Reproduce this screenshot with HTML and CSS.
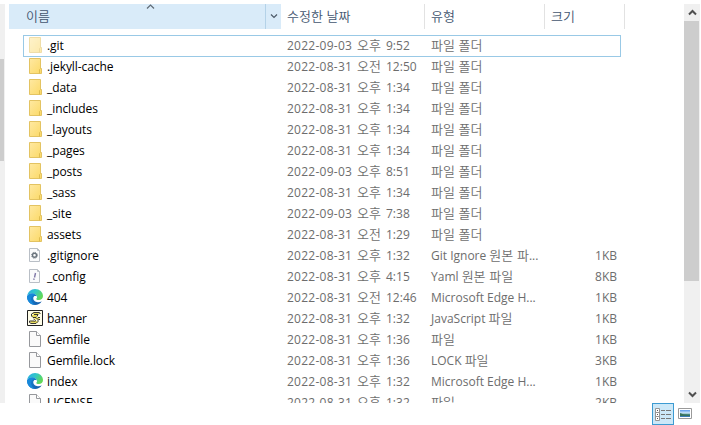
FILE: index.html
```html
<!DOCTYPE html>
<html lang="ko">
<head>
<meta charset="utf-8">
<title>파일 탐색기</title>
<link rel="stylesheet" href="styles.css">
</head>
<body>
<svg width="0" height="0" class="defs" aria-hidden="true">
  <defs>
    <linearGradient id="fold" x1="0" y1="0" x2="1" y2="1"><stop stop-color="#ffe9a2"/><stop offset="1" stop-color="#fbd967"/></linearGradient>
    <linearGradient id="wave" x1="0" y1="0" x2="1" y2="0.5"><stop stop-color="#2aa9e8"/><stop offset=".5" stop-color="#31c6c9"/><stop offset="1" stop-color="#62d957"/></linearGradient>
    <linearGradient id="deep" x1="0" y1="0" x2="1" y2="1"><stop stop-color="#168bdc"/><stop offset="1" stop-color="#1458a5"/></linearGradient>
    <linearGradient id="sky" x1="0" y1="0" x2="0" y2="1"><stop stop-color="#5b98ea"/><stop offset=".45" stop-color="#d2edfc"/><stop offset=".6" stop-color="#4b8a80"/><stop offset="1" stop-color="#3579c4"/></linearGradient>
  </defs>
  <symbol id="folder" viewBox="0 0 16 16">
    <path d="M2.500.5h11v10h1v5h-12z" fill="url(#fold)" stroke="#e3c362"/>
    <path d="M12.500 15.500v-4l1-1" fill="none" stroke="#dfbd50"/>
  </symbol>
  <symbol id="page" viewBox="0 0 16 16">
    <path d="M2.500.5h7l4 4v11h-11z" fill="#fafafa" stroke="#96989c"/>
    <path d="M9.500.5v4h4" fill="#fff" stroke="#96989c"/>
  </symbol>
  <symbol id="gear" viewBox="0 0 16 16">
    <path d="M2.500 1.500h8l2 2v11h-10z" fill="#fafbfc" stroke="#b9bfc6"/>
    <path d="M10.500 1.500v2h2" fill="none" stroke="#b9bfc6"/>
    <circle cx="7.500" cy="8.300" r="2" fill="none" stroke="#69737c" stroke-width="1.400"/>
    <circle cx="7.500" cy="8.300" r="3" fill="none" stroke="#7b848c" stroke-dasharray="1.200 1.156"/>
  </symbol>
  <symbol id="yaml" viewBox="0 0 16 16">
    <path d="M2.500 1.500h8l2 2v11h-10z" fill="#fafbfc" stroke="#b9bfc6"/>
    <path d="M10.500 1.500v2h2" fill="none" stroke="#b9bfc6"/>
    <path d="M8.500 5l-1 4.500M7.100 10.500l-.3 1.300" stroke="#7f78a8" stroke-width="1.400"/>
  </symbol>
  <symbol id="edge" viewBox="0 0 16 16">
    <path d="M.2 7C.7 3 4 0 8 0c4.600 0 8 3.300 8 7 0 2.500-1.900 4.100-4.200 4.100-1.700 0-2.700-.6-2.700-1.200 0-.5.8-.7.8-1.900C9.900 6 7.700 4.400 5 4.400 2.700 4.400 1 5.500.2 7z" fill="url(#wave)"/>
    <path d="M.1 7.300C1 5.500 2.800 4.400 5 4.400c2.700 0 4.900 1.600 4.900 3.600-.5-.9-1.500-1.200-2.300-1-2.200 1-1.800 5 2.100 6 2 .5 3.600.1 5-.7C13.300 14.800 10.800 16 8 16 3.300 16-.2 12 .1 7.300z" fill="url(#deep)"/>
    <path d="M.1 7.300C1 5.500 2.800 4.400 5 4.400c1.400 0 2.700.5 3.600 1.200C5 5.600 3 9.200 4.500 12c.8 1.700 2.100 3 3.500 4C3.300 16-.2 12 .1 7.300z" fill="#1788da"/>
    <path d="M9.900 8c0-.7-1.200-1.100-2-.9-1.300 1-1.400 3.300.3 4.500 1.800 1.300 4.500 1.100 6.500.1-1.900-.2-5.600-.2-5.600-1.800 0-.5.8-.7.8-1.900z" fill="#fff"/>
  </symbol>
  <symbol id="script" viewBox="0 0 16 16">
    <path d="M.5.5h15v15H.5z" fill="#fffde8" stroke="#222"/>
    <path d="M6 3.500h6M5 6h5M7.500 8.500h5M3.500 12h7" stroke="#e9dc5c" stroke-width="1.800"/>
    <path d="M13 4V3l-1-.5H7L4.500 4v2l1.500 1.500h3l2 2v2L9 13.500H4l-1.500-1V11H7M7 4.500h4l-1 2M6.500 9l2 1.500-1 1.500M11 7.500h2M11.500 9.500H13" fill="none" stroke="#222" stroke-width=".9"/>
  </symbol>
</svg>

<div class="window">
  <div class="explorer">
    <div class="nav-scroll"><div class="nav-thumb"></div></div>
    <main class="list">
      <header class="head">
        <div class="h-name"><span>이름</span>
          <svg class="sort" width="9" height="5" viewBox="0 0 9 5"><path d="M1 4.500l3.500-3.500L8 4.500" fill="none" stroke="#5f6b76" stroke-width="1.200"/></svg>
          <div class="drop"><svg width="8" height="5" viewBox="0 0 8 5"><path d="M1 .5l3 3 3-3" fill="none" stroke="#4c5a68" stroke-width="1.200"/></svg></div>
        </div>
        <div class="h-date">수정한 날짜</div>
        <div class="h-type">유형</div>
        <div class="h-size">크기</div>
      </header>
      <div class="rows" id="rows"></div>
    </main>
    <div class="scroll">
      <div class="arrow"><svg width="9" height="7" viewBox="0 0 9 7"><path d="M1 5.500l3.500-3.500L8 5.500" fill="none" stroke="#505050" stroke-width="2"/></svg></div>
      <div class="thumb"></div>
      <div class="arrow end"><svg width="9" height="7" viewBox="0 0 9 7"><path d="M1 1.500l3.500 3.500L8 1.500" fill="none" stroke="#505050" stroke-width="2"/></svg></div>
    </div>
  </div>
  <footer class="status">
    <div class="view on"><svg width="16" height="13" viewBox="0 0 16 13"><path d="M.5.5h4v12h-4zM.5 4.500h4M.5 8.500h4" fill="#fff" stroke="#959595"/><path d="M2 2.500h1M2 6.500h1M2 10.500h1" stroke="#555"/><path d="M6 2.500h4M11 2.500h5M6 6.500h4M11 6.500h5M6 10.500h4M11 10.500h5" stroke="#777"/></svg></div>
    <div class="view picture"><svg width="14" height="11" viewBox="0 0 14 11"><path d="M.5.5h13v10H.5z" fill="#fff" stroke="#9a9a9a"/><path d="M2 2h10v7H2z" fill="url(#sky)"/><path d="M2 5l4 1.500 6 .5v1H2z" fill="#39745c"/></svg></div>
  </footer>
</div>
<script src="rows.js"></script>
</body>
</html>
```
FILE: styles.css
```css
* { box-sizing: border-box; }
body { margin: 0; background: #fff; overflow: hidden; font: 12px/21px "Open Sans", "Noto Sans CJK KR", sans-serif; }
.defs { position: absolute; }
.window { width: 701px; height: 425px; padding-top: 4px; display: flex; flex-direction: column; }
.explorer { height: 399px; display: flex; overflow: hidden; flex: none; }
.nav-scroll { width: 5px; margin-right: 4px; background: #f0f0f0; padding-top: 55px; flex: none; }
.nav-thumb { width: 4px; height: 102px; background: #cdcdcd; }
.list { width: 675px; overflow: hidden; flex: none; }
.head { display: flex; height: 25px; color: #43566f; font: 350 13px/23px "Noto Sans CJK KR", sans-serif; }
.h-name { position: relative; width: 272px; background: #d9ebf9; padding-left: 17px; display: flex; justify-content: space-between; }
.sort { position: absolute; left: 137px; top: 0; }
.drop { width: 16px; border-left: 1px solid #b4d2e8; display: flex; align-items: center; justify-content: center; }
.h-date { width: 144px; padding-left: 6px; border-right: 1px solid #e2e2e2; }
.h-type { width: 120px; padding-left: 6px; border-right: 1px solid #e2e2e2; }
.h-size { width: 80px; padding-left: 6px; border-right: 1px solid #e2e2e2; }
.rows { margin: 6px 0 0 14px; }
.row { display: flex; width: 598px; height: 21px; padding: 0 4px; color: #6d6d6d; white-space: nowrap; }
.row.focus { height: 22px; margin-bottom: -1px; box-shadow: inset 0 0 0 1px #99c9e6; }
.icon { width: 16px; height: 16px; margin-top: 2px; margin-right: 4px; flex: none; }
.focus .icon { opacity: .55; }
.name { width: 240px; color: #000; letter-spacing: -.08px; }
.date { width: 144px; display: flex; }
.day { width: 70px; letter-spacing: .25px; }
.ampm { width: 29px; }
.ko { font: 350 13px/20px "Noto Sans CJK KR", sans-serif; }
.type { width: 120px; }
.size { width: 66px; text-align: right; }
.scroll { width: 16px; background: #f0f0f0; display: flex; flex-direction: column; flex: none; }
.arrow { height: 17px; display: flex; align-items: center; justify-content: center; }
.thumb { height: 260px; width: 15px; background: #cdcdcd; }
.end { margin-top: auto; }
.status { height: 22px; padding-left: 652px; display: flex; flex: none; }
.view { width: 22px; height: 22px; display: flex; align-items: center; justify-content: center; flex: none; }
.view.on { background: #cce8f8; border: 1px solid #3c9bd2; }
.picture { padding-bottom: 1px; }
```
FILE: rows.js
```js
const files = [
  ['folder', '.git', '2022-09-03', '오후', '9:52', '파일 폴더', ''],
  ['folder', '.jekyll-cache', '2022-08-31', '오전', '12:50', '파일 폴더', ''],
  ['folder', '_data', '2022-08-31', '오후', '1:34', '파일 폴더', ''],
  ['folder', '_includes', '2022-08-31', '오후', '1:34', '파일 폴더', ''],
  ['folder', '_layouts', '2022-08-31', '오후', '1:34', '파일 폴더', ''],
  ['folder', '_pages', '2022-08-31', '오후', '1:34', '파일 폴더', ''],
  ['folder', '_posts', '2022-09-03', '오후', '8:51', '파일 폴더', ''],
  ['folder', '_sass', '2022-08-31', '오후', '1:34', '파일 폴더', ''],
  ['folder', '_site', '2022-09-03', '오후', '7:38', '파일 폴더', ''],
  ['folder', 'assets', '2022-08-31', '오전', '1:29', '파일 폴더', ''],
  ['gear', '.gitignore', '2022-08-31', '오후', '1:32', 'Git Ignore 원본 파...', '1KB'],
  ['yaml', '_config', '2022-08-31', '오후', '4:15', 'Yaml 원본 파일', '8KB'],
  ['edge', '404', '2022-08-31', '오전', '12:46', 'Microsoft Edge H...', '1KB'],
  ['script', 'banner', '2022-08-31', '오후', '1:32', 'JavaScript 파일', '1KB'],
  ['page', 'Gemfile', '2022-08-31', '오후', '1:36', '파일', '1KB'],
  ['page', 'Gemfile.lock', '2022-08-31', '오후', '1:36', 'LOCK 파일', '3KB'],
  ['edge', 'index', '2022-08-31', '오후', '1:32', 'Microsoft Edge H...', '1KB'],
  ['page', 'LICENSE', '2022-08-31', '오후', '1:32', '파일', '2KB']
];
const korean = text => text.replace(/[가-힣]+( [가-힣]+)*/g, '<span class="ko">$&</span>');
document.getElementById('rows').innerHTML = files.map(([icon, name, day, ampm, time, type, size], i) => `
  <div class="row${i ? '' : ' focus'}">
    <svg class="icon"><use href="#${icon}"/></svg>
    <div class="name">${name}</div>
    <div class="date"><span class="day">${day}</span><span class="ampm ko">${ampm}</span><span>${time}</span></div>
    <div class="type">${korean(type)}</div>
    <div class="size">${size}</div>
  </div>`).join('');
```
